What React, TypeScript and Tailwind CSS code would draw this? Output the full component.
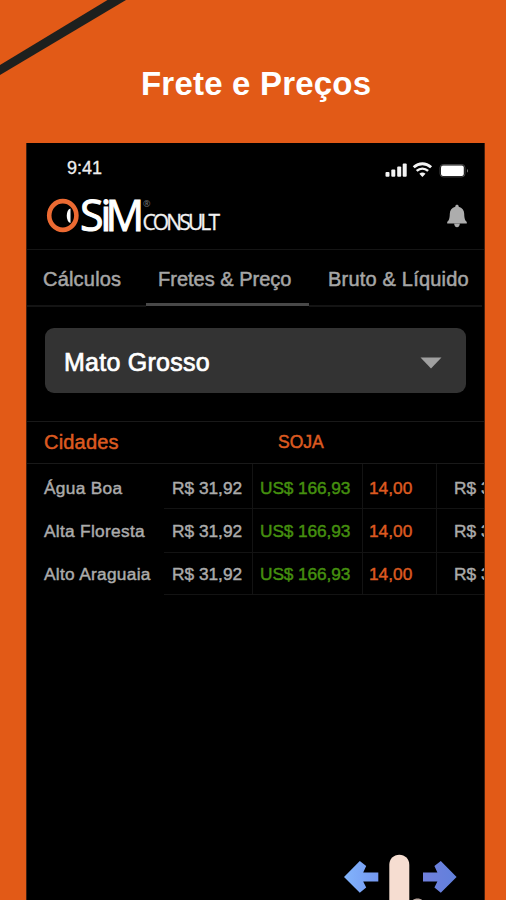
import clsx from "clsx";

const tabs = [
  { label: "Cálculos", active: false, width: "w-[119px] pl-4 tracking-[0.2px]" },
  { label: "Fretes & Preço", active: true, width: "w-[163px] pl-3" },
  { label: "Bruto & Líquido", active: false, width: "w-[173px] pl-[19px] tracking-[0.2px]" },
];

const rows = [
  { city: "Água Boa", brl: "R$ 31,92", usd: "US$ 166,93", freight: "14,00", size: "h-[45px] leading-[48px]" },
  { city: "Alta Floresta", brl: "R$ 31,92", usd: "US$ 166,93", freight: "14,00", size: "h-11 leading-[45px]" },
  { city: "Alto Araguaia", brl: "R$ 31,92", usd: "US$ 166,93", freight: "14,00", size: "h-[42px] leading-[42px]" },
];

function StatusIcons() {
  return (
    <svg width="86" height="18" viewBox="0 0 86 18" fill="none" aria-hidden="true">
      <rect x="1.5" y="10" width="4" height="4.8" rx="1" fill="#f4f4f4" />
      <rect x="7.3" y="7.5" width="4" height="7.3" rx="1" fill="#f4f4f4" />
      <rect x="13.2" y="4.5" width="4" height="10.3" rx="1" fill="#f4f4f4" />
      <rect x="18.7" y="1.5" width="4" height="13.3" rx="1" fill="#f4f4f4" />
      <path d="M29.7 5.300C35 .5 41.800.5 47.100 5.300" stroke="#f4f4f4" strokeWidth="2.9" />
      <path d="M32.700 8.900C36.100 5.900 40.700 5.900 44.100 8.900" stroke="#f4f4f4" strokeWidth="2.5" />
      <path d="M35.300 11.700c1.900-1.700 4.300-1.700 6.200 0l-3.100 3.200z" fill="#f4f4f4" />
      <rect x="56" y="2.5" width="25" height="12.4" rx="3.2" stroke="#555" strokeWidth=".8" />
      <rect x="57" y="3.5" width="22.8" height="10.6" rx="2" fill="#fff" />
      <path d="M83 6.900c1.200.4 1.200 3.200 0 3.600z" fill="#888" />
    </svg>
  );
}

function Logo() {
  return (
    <svg width="180" height="44" viewBox="0 0 180 44" role="img" aria-label="SiM Consult">
      <ellipse cx="17.8" cy="21.5" rx="13.6" ry="14.4" fill="none" stroke="#ec6a32" strokeWidth="4.6" />
      <path d="M25.500 14.500v14.500c-5-1-5-13.500 0-14.500z" fill="#fff" />
      <text
        x="35 55.5 60.5"
        y="36.5"
        fill="#fff"
        fontSize="43"
        stroke="#fff"
        strokeWidth="1"
        className="font-['Open_Sans',sans-serif]"
      >
        SiM
      </text>
      <text x="98" y="12.5" fill="#777" fontSize="9" className="font-['Open_Sans',sans-serif]">
        ®
      </text>
      <text
        x="97.5"
        y="36.3"
        fill="#f2f2f2"
        fontSize="21"
        textLength="77.5"
        stroke="#f2f2f2"
        strokeWidth=".3"
        className="font-['Open_Sans',sans-serif]"
      >
        CONSULT
      </text>
    </svg>
  );
}

function BellIcon() {
  return (
    <svg width="22" height="25" viewBox="0 0 22 25" fill="#adadad" aria-hidden="true">
      <path d="M11 .8c1 0 1.700.7 1.700 1.600v.4c3.500.8 5.400 3.600 5.500 7 .1 4.800.8 6.600 2.600 8.200v1.600H1.200V18c1.800-1.600 2.500-3.400 2.600-8.200.1-3.400 2-6.200 5.500-7v-.4C9.300 1.500 10 .8 11 .8z" />
      <path d="M8.200 19.400h5.600c0 2.400-1.200 3.800-2.800 3.800s-2.800-1.400-2.800-3.800z" />
    </svg>
  );
}

function SwipeHint() {
  return (
    <svg width="116" height="50" viewBox="0 0 116 50" className="ml-[315px]" aria-hidden="true">
      <defs>
        <linearGradient id="left" x1="0" y1="0" x2="1" y2="0">
          <stop offset="0" stopColor="#82b4fb" />
          <stop offset="1" stopColor="#7498f1" />
        </linearGradient>
        <linearGradient id="right" x1="0" y1="0" x2="1" y2="0">
          <stop offset="0" stopColor="#7080dd" />
          <stop offset="1" stopColor="#6180dc" />
        </linearGradient>
      </defs>
      <path d="M2 27 17.800 11l6.400 5-3 6.400h15.100v9.200H21.200l3 6-6.400 5.200z" fill="url(#left)" />
      <path d="M114.600 27 98.800 11l-6.400 5 3 6.400H81v9.200h14.400l-3 6 6.400 5.200z" fill="url(#right)" />
      <path d="M47.300 50V14.800c0-5.700 4.300-10 10-10s10 4.300 10 10V50z" fill="#f6ddd1" />
      <path d="M71 50c1.500-2 7.500-2 9 0z" fill="#b7a59d" />
    </svg>
  );
}

export default function App() {
  return (
    <main className="relative flex h-[900px] w-[506px] flex-col overflow-hidden bg-[#e25a17] font-['Liberation_Sans',Arial,sans-serif]">
      <svg width="126" height="76" viewBox="0 0 126 76" className="absolute left-0 top-0" aria-hidden="true">
        <path d="M0 65 107.500 0H126L0 75z" fill="#1e201e" />
      </svg>

      <h1 className="h-[143px] shrink-0 pl-[141px] pt-[65px] text-[33px] font-bold leading-[38px] tracking-[0.2px] whitespace-nowrap text-white">
        Frete e Preços
      </h1>

      <section className="ml-[26px] flex w-[459px] flex-1 flex-col overflow-hidden border-x border-[#42200f] bg-black">
        <div className="flex h-[49px] items-center justify-between pl-10 pr-3.5">
          <span className="mt-px text-[18px] text-[#eee] [-webkit-text-stroke:0.3px]">9:41</span>
          <span className="mt-1.5">
            <StatusIcons />
          </span>
        </div>

        <header className="flex h-[58px] items-start justify-between border-b border-[#151515] pl-[18px] pr-4">
          <span className="mt-[2px]">
            <Logo />
          </span>
          <span className="mt-3">
            <BellIcon />
          </span>
        </header>

        <nav className="flex h-[57px] shrink-0">
          {tabs.map((tab) => (
            <div
              key={tab.label}
              className={clsx(
                "shrink-0 whitespace-nowrap pt-[17px] text-[20px] leading-6 text-[#a6a6a6] [-webkit-text-stroke:0.5px]",
                tab.active ? "mb-px border-b-[3px] border-[#484848]" : "border-b-2 border-[#141414]",
                tab.width,
              )}
            >
              {tab.label}
            </div>
          ))}
        </nav>

        <div className="ml-[18px] mt-[21px] flex h-[65px] w-[421px] shrink-0 items-center justify-between rounded-[9px] bg-[#333] pl-[19px] pr-6">
          <span className="mt-1 text-[25px] tracking-[0.25px] text-white [-webkit-text-stroke:0.7px]">Mato Grosso</span>
          <svg width="22" height="12" viewBox="0 0 22 12" className="mt-1" aria-hidden="true">
            <path d="M.5.5h21L11 11.500z" fill="#a0a0a0" />
          </svg>
        </div>

        <div className="mt-7 flex h-[43px] shrink-0 items-center border-y border-[#191919] text-[#dc5a20] [-webkit-text-stroke:0.5px]">
          <span className="-mt-0.5 w-[234px] pl-[17px] text-[20px] tracking-[0.2px]">Cidades</span>
          <span className="pl-[17px] text-[17.5px]">SOJA</span>
        </div>

        {rows.map((row) => (
          <div
            key={row.city}
            className={clsx(
              "flex shrink-0 whitespace-nowrap text-[17.3px] text-[#ababab] [-webkit-text-stroke:0.45px]",
              row.size,
            )}
          >
            <span className="w-[137px] shrink-0 pl-[17px] tracking-[0.3px]">{row.city}</span>
            <span className="w-[89px] shrink-0 border-b border-r border-[#131313] pl-2">{row.brl}</span>
            <span className="w-[110px] shrink-0 border-b border-r border-[#131313] pl-[7px] tracking-[-0.1px] text-[#45900f]">
              {row.usd}
            </span>
            <span className="w-[74px] shrink-0 border-b border-r border-[#131313] pl-1.5 text-[#dc5a20]">{row.freight}</span>
            <span className="w-[100px] shrink-0 border-b border-[#131313] pl-[17px]">{row.brl}</span>
          </div>
        ))}

        <div className="mt-auto flex h-[50px]">
          <SwipeHint />
        </div>
      </section>
    </main>
  );
}
